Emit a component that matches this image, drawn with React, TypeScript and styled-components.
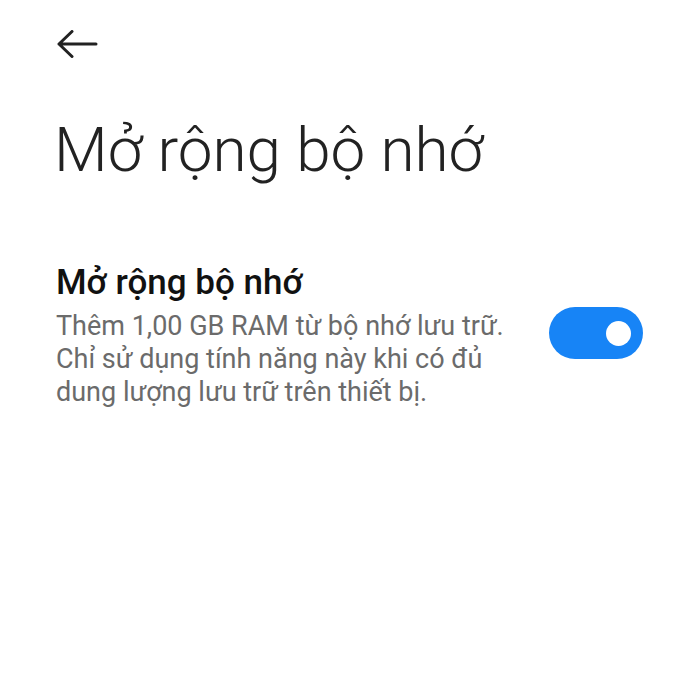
import styled, { createGlobalStyle } from "styled-components"

const GlobalStyle = createGlobalStyle`
  html, body {
    margin: 0;
    padding: 0;
    background: #ffffff;
  }
  body {
    font-family: Roboto, "Noto Sans", "Liberation Sans", sans-serif;
  }
`;

const Screen = styled.div`
  width: 700px;
  height: 700px;
  background: #ffffff;
  box-sizing: border-box;
  padding: 30px 56px 0 56px;
  display: flex;
  flex-direction: column;
`;

const BackButton = styled.button`
  width: 42px;
  height: 28px;
  padding: 0;
  border: none;
  background: transparent;
  display: flex;
  align-items: center;
  cursor: pointer;
`;

const PageTitle = styled.h1`
  margin: 56px 0 0 -2px;
  font-size: 62px;
  line-height: 72px;
  font-weight: 300;
  color: #222222;
  letter-spacing: 0;
`;

const SettingRow = styled.div`
  margin-top: 77px;
  display: flex;
  align-items: flex-start;
  justify-content: space-between;
  gap: 24px;
`;

const SettingText = styled.div`
  display: flex;
  flex-direction: column;
`;

const SettingTitle = styled.div`
  font-size: 35px;
  line-height: 40px;
  font-weight: 500;
  color: #111111;
`;

const SettingDesc = styled.div`
  margin-top: 7px;
  font-size: 27px;
  line-height: 33px;
  color: #6b6b6b;
`;

const Toggle = styled.button<{ $on: boolean }>`
  flex-shrink: 0;
  width: 94px;
  height: 52px;
  margin-top: 44px;
  margin-right: 1px;
  border-radius: 26px;
  border: none;
  padding: 0 12px;
  background: ${({ $on }) => ($on ? "#1784f6" : "#d6d6d6")};
  display: flex;
  align-items: center;
  justify-content: ${({ $on }) => ($on ? "flex-end" : "flex-start")};
`;

const Knob = styled.span`
  width: 25px;
  height: 25px;
  border-radius: 50%;
  background: #ffffff;
`;

export default function App() {
  return (
    <>
      <GlobalStyle />
      <Screen>
        <BackButton aria-label="Quay lại">
          <svg width="42" height="28" viewBox="0 0 42 28" fill="none">
            <path
              d="M3 14H40M16 1.5L3 14L16 26.5"
              stroke="#222222"
              strokeWidth="3"
              strokeLinecap="round"
              strokeLinejoin="round"
            />
          </svg>
        </BackButton>
        <PageTitle>Mở rộng bộ nhớ</PageTitle>
        <SettingRow>
          <SettingText>
            <SettingTitle>Mở rộng bộ nhớ</SettingTitle>
            <SettingDesc>
              Thêm 1,00 GB RAM từ bộ nhớ lưu trữ.
              <br />
              Chỉ sử dụng tính năng này khi có đủ
              <br />
              dung lượng lưu trữ trên thiết bị.
            </SettingDesc>
          </SettingText>
          <Toggle $on={true} aria-label="Bật">
            <Knob />
          </Toggle>
        </SettingRow>
      </Screen>
    </>
  )
}
